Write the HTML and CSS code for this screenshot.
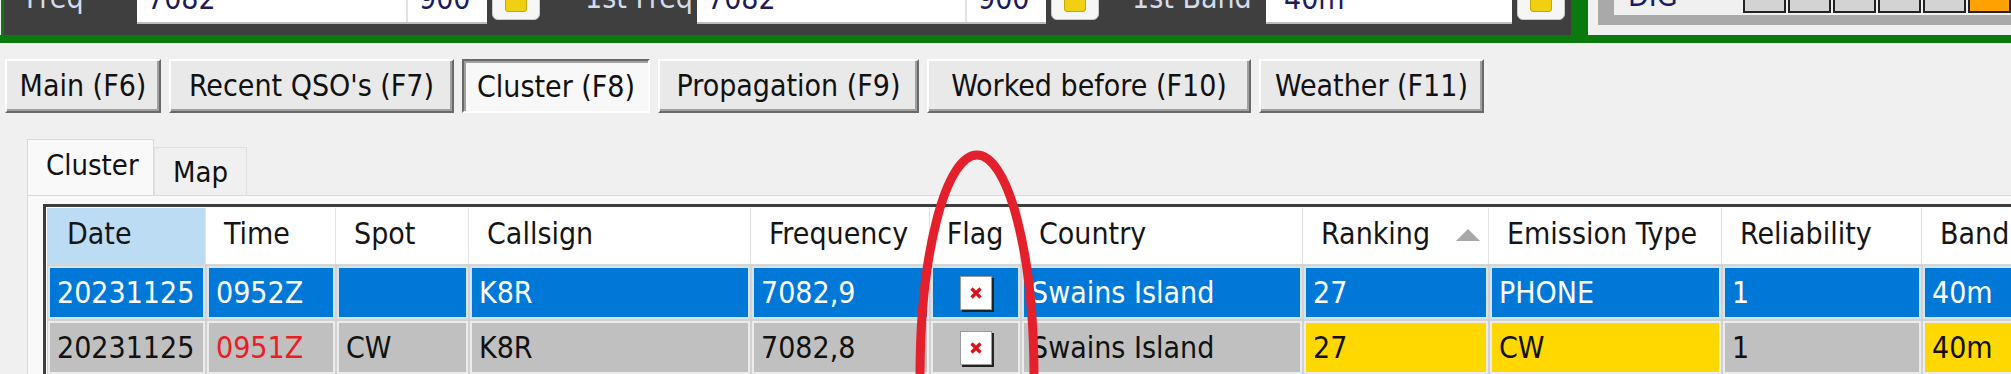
FILE: index.html
```html
<html>
  <head>
    <title>Cluster</title>
    <link rel="stylesheet" href="styles.css">
  </head>
  <body>
    <div class="topbar">
      <div class="freqpanel">
        <span class="lbl lbl-freq">Freq</span>
        <div class="field f1"><span>7082</span></div>
        <div class="field sub"><span>900</span></div>
        <div class="ybtn"><span class="ysq"></span></div>
        <span class="lbl lbl-1st">1st Freq</span>
        <div class="field f2"><span>7082</span></div>
        <div class="field sub"><span>900</span></div>
        <div class="ybtn"><span class="ysq"></span></div>
        <span class="lbl lbl-band">1st Band</span>
        <div class="field combo"><span>40m</span><i class="arrow"></i></div>
        <div class="ybtn"><span class="ysq"></span></div>
      </div>
      <div class="divider"></div>
      <div class="modepanel">
        <div class="modeframe">
          <div class="modeinner">
            <span class="mode">DIG</span>
            <div class="leds">
              <i class="led"></i><i class="led"></i><i class="led"></i>
              <i class="led"></i><i class="led"></i><i class="led on"></i>
            </div>
          </div>
        </div>
      </div>
    </div>

    <div class="fkeys">
      <div class="btn w-main">Main (F6)</div>
      <div class="btn w-recent">Recent QSO's (F7)</div>
      <div class="btn down w-cluster">Cluster (F8)</div>
      <div class="btn w-prop">Propagation (F9)</div>
      <div class="btn w-worked">Worked before (F10)</div>
      <div class="btn w-weather">Weather (F11)</div>
    </div>

    <div class="tabs">
      <div class="tab active">Cluster</div>
      <div class="tab">Map</div>
    </div>

    <div class="pane">
      <div class="grid">
        <div class="row head">
          <div class="hc cur">Date</div>
          <div class="hc">Time</div>
          <div class="hc">Spot</div>
          <div class="hc">Callsign</div>
          <div class="hc">Frequency</div>
          <div class="hc center">Flag</div>
          <div class="hc">Country</div>
          <div class="hc sorted">Ranking<i class="tri"></i></div>
          <div class="hc">Emission Type</div>
          <div class="hc">Reliability</div>
          <div class="hc">Band</div>
        </div>
        <div class="row data sel">
          <div class="dc">20231125</div>
          <div class="dc">0952Z</div>
          <div class="dc"></div>
          <div class="dc">K8R</div>
          <div class="dc">7082,9</div>
          <div class="dc flagcell"><span class="flag"><svg width="14" height="14" viewBox="0 0 14 14"><path d="M2.5 2.5L11.5 11.5M11.5 2.5L2.5 11.5" stroke="#e0101a" stroke-width="3.2"/></svg></span></div>
          <div class="dc">Swains Island</div>
          <div class="dc">27</div>
          <div class="dc">PHONE</div>
          <div class="dc">1</div>
          <div class="dc">40m</div>
        </div>
        <div class="row data">
          <div class="dc">20231125</div>
          <div class="dc red">0951Z</div>
          <div class="dc">CW</div>
          <div class="dc">K8R</div>
          <div class="dc">7082,8</div>
          <div class="dc flagcell"><span class="flag"><svg width="14" height="14" viewBox="0 0 14 14"><path d="M2.5 2.5L11.5 11.5M11.5 2.5L2.5 11.5" stroke="#e0101a" stroke-width="3.2"/></svg></span></div>
          <div class="dc">Swains Island</div>
          <div class="dc gold">27</div>
          <div class="dc gold">CW</div>
          <div class="dc">1</div>
          <div class="dc gold">40m</div>
        </div>
      </div>
    </div>

    <svg class="annot" width="2011" height="374" viewBox="0 0 2011 374">
      <ellipse cx="977" cy="377" rx="57" ry="222" fill="none" stroke="#e3202b" stroke-width="9"/>
    </svg>
  </body>
</html>
```

FILE: styles.css
```css
body { margin: 0; width: 2011px; height: 374px; overflow: hidden;
       position: relative;
       font-family: "DejaVu Sans Condensed", "DejaVu Sans", sans-serif;
       font-stretch: condensed;
       font-size: 30px; color: #111;
       background-color: #f0f0f0; }

/* ---- top strip (cut off by the screenshot) ---- */
.topbar    { display: flex; height: 35px; overflow: hidden;
             border-bottom: 8px solid #0a7a0e; }

.freqpanel { display: flex; align-items: flex-end; width: 1579px;
             margin-left: 1px; border-left: 3px solid #0a7a0e;
             background-color: #3f3f3f; padding-bottom: 13px;
             box-sizing: border-box; }

.lbl       { color: #d4dcec; line-height: 30px; margin-bottom: 9px;
             white-space: nowrap; }
.lbl-freq  { margin-left: 22px; width: 111px; }
.lbl-1st   { margin-left: 45px; width: 112px; }
.lbl-band  { margin-left: 33px; width: 134px; }

.field     { height: 44px; background-color: #ffffff; color: #1b1b5e;
             display: flex; align-items: flex-end; box-sizing: border-box;
             padding: 0 0 8px 10px; line-height: 30px;
             box-shadow: 0 2px 0 #bdbdbd; }
.f1        { width: 269px; }
.f2        { width: 268px; }
.sub       { width: 81px; border-left: 2px solid #e2e2e2; padding-left: 11px; }
.combo     { width: 246px; position: relative; padding-left: 18px; }
.combo .arrow { position: absolute; right: 18px; top: 0; width: 4px; height: 3px;
                background-color: #555; }

.ybtn      { width: 48px; height: 40px; margin-left: 5px; margin-bottom: 2px;
             background-color: #f6f6f6; border-radius: 0 0 6px 6px;
             border: 1px solid #c9c9c9; box-sizing: border-box;
             display: flex; align-items: flex-end; justify-content: center;
             padding-bottom: 7px; }
.ysq       { width: 22px; height: 30px; background-color: #f1cf12;
             border: 1px solid #c9a600; border-radius: 0 0 3px 3px;
             box-sizing: border-box; }

.divider   { width: 17px; background-color: #0a7a0e; }

.modepanel { flex: 1; background-color: #f0f0f0; padding-left: 10px; }
.modeframe { height: 25px; background-color: #a9a9a9; padding-left: 16px; }
.modeinner { height: 15px; background-color: #f0f0f0; display: flex;
             align-items: flex-end; overflow: hidden; }
.mode      { color: #1b1b5e; line-height: 30px; margin-left: 14px;
             margin-bottom: 4px; width: 115px; }
.leds      { display: flex; gap: 2px; margin-bottom: 2px; }
.led       { width: 43px; height: 30px; background-color: #d3d3d3;
             border: 2px solid #222; box-sizing: border-box; }
.led.on    { background-color: #ffa200; }

/* ---- function key buttons ---- */
.fkeys     { display: flex; gap: 8px; margin: 16px 0 0 5px; }
.btn       { height: 54px; line-height: 50px; box-sizing: border-box;
             text-align: center; white-space: nowrap;
             background-color: #e9e9e9;
             border: 2px solid; border-color: #ffffff #696969 #696969 #ffffff;
             box-shadow: inset -2px -2px 0 #a0a0a0; }
.btn.down  { background-color: #f8f8f8; line-height: 52px;
             border-color: #696969 #ffffff #ffffff #696969;
             box-shadow: inset 2px 2px 0 #a0a0a0; }
.w-main    { width: 156px; }
.w-recent  { width: 285px; }
.w-cluster { width: 188px; }
.w-prop    { width: 261px; }
.w-worked  { width: 324px; }
.w-weather { width: 225px; }

/* ---- inner tab control ---- */
.tabs      { display: flex; align-items: flex-end; margin: 26px 0 0 27px; }
.tab       { height: 48px; line-height: 48px; padding: 0 18px;
             box-sizing: border-box; font-size: 29px;
             background-color: #f0f0f0; border: 1px solid #e0e0e0;
             border-bottom: none; }
.tab.active{ height: 56px; line-height: 50px; width: 127px;
             background-color: #f9f9f9; border-color: #dadada; }

.pane      { margin-left: 27px; border-top: 1px solid #dadada;
             border-left: 1px solid #dadada; background-color: #f9f9f9;
             padding: 8px 0 0 15px; height: 200px; }

/* ---- grid ---- */
.grid      { border-top: 3px solid #3c3c3c; border-left: 3px solid #3c3c3c;
             padding: 1px 0 0 1px; background-color: #ffffff; }
.row       { display: grid;
             grid-template-columns: 159px 130px 133px 282px 179px 91px
                                    282px 186px 233px 200px 180px; }
.head      { height: 56px; background-color: #ffffff;
             border-bottom: 1px solid #d6d6d6; }
.hc        { line-height: 52px; padding-left: 18px; border-right: 1px solid #e3e3e3;
             white-space: nowrap; display: flex; color: #151515; }
.hc.cur    { background-color: #bcdcf4; padding-left: 20px; }
.hc.center { justify-content: center; padding-left: 0; }
.tri       { margin: 21px 8px 0 auto; width: 0; height: 0;
             border-left: 12px solid transparent; border-right: 12px solid transparent;
             border-bottom: 12px solid #a8a8a8; }

.data      { height: 55px; background-color: #e4e4e4; }
.dc        { background-color: #c0c0c0; color: #111;
             border: 1px solid #d2d2d2; box-shadow: inset 0 0 0 2px #ececec;
             padding: 4px 0 0 9px; line-height: 46px; white-space: nowrap;
             overflow: hidden; }
.sel .dc   { background-color: #0078d7; color: #ffffff;
             box-shadow: inset 0 0 0 2px #d6e4f2; }
.dc.red    { color: #ea1c24; }
.dc.gold   { background-color: #ffd800; }

.flagcell  { display: flex; justify-content: center; align-items: center;
             padding: 0; }
.flag      { width: 32px; height: 34px; background-color: #ffffff;
             border: 1px solid #9a9a9a; box-shadow: 2px 2px 0 #222;
             display: flex; align-items: center; justify-content: center;
             box-sizing: border-box; }

/* ---- red annotation ---- */
.annot     { position: absolute; left: 0; top: 0; }
```
